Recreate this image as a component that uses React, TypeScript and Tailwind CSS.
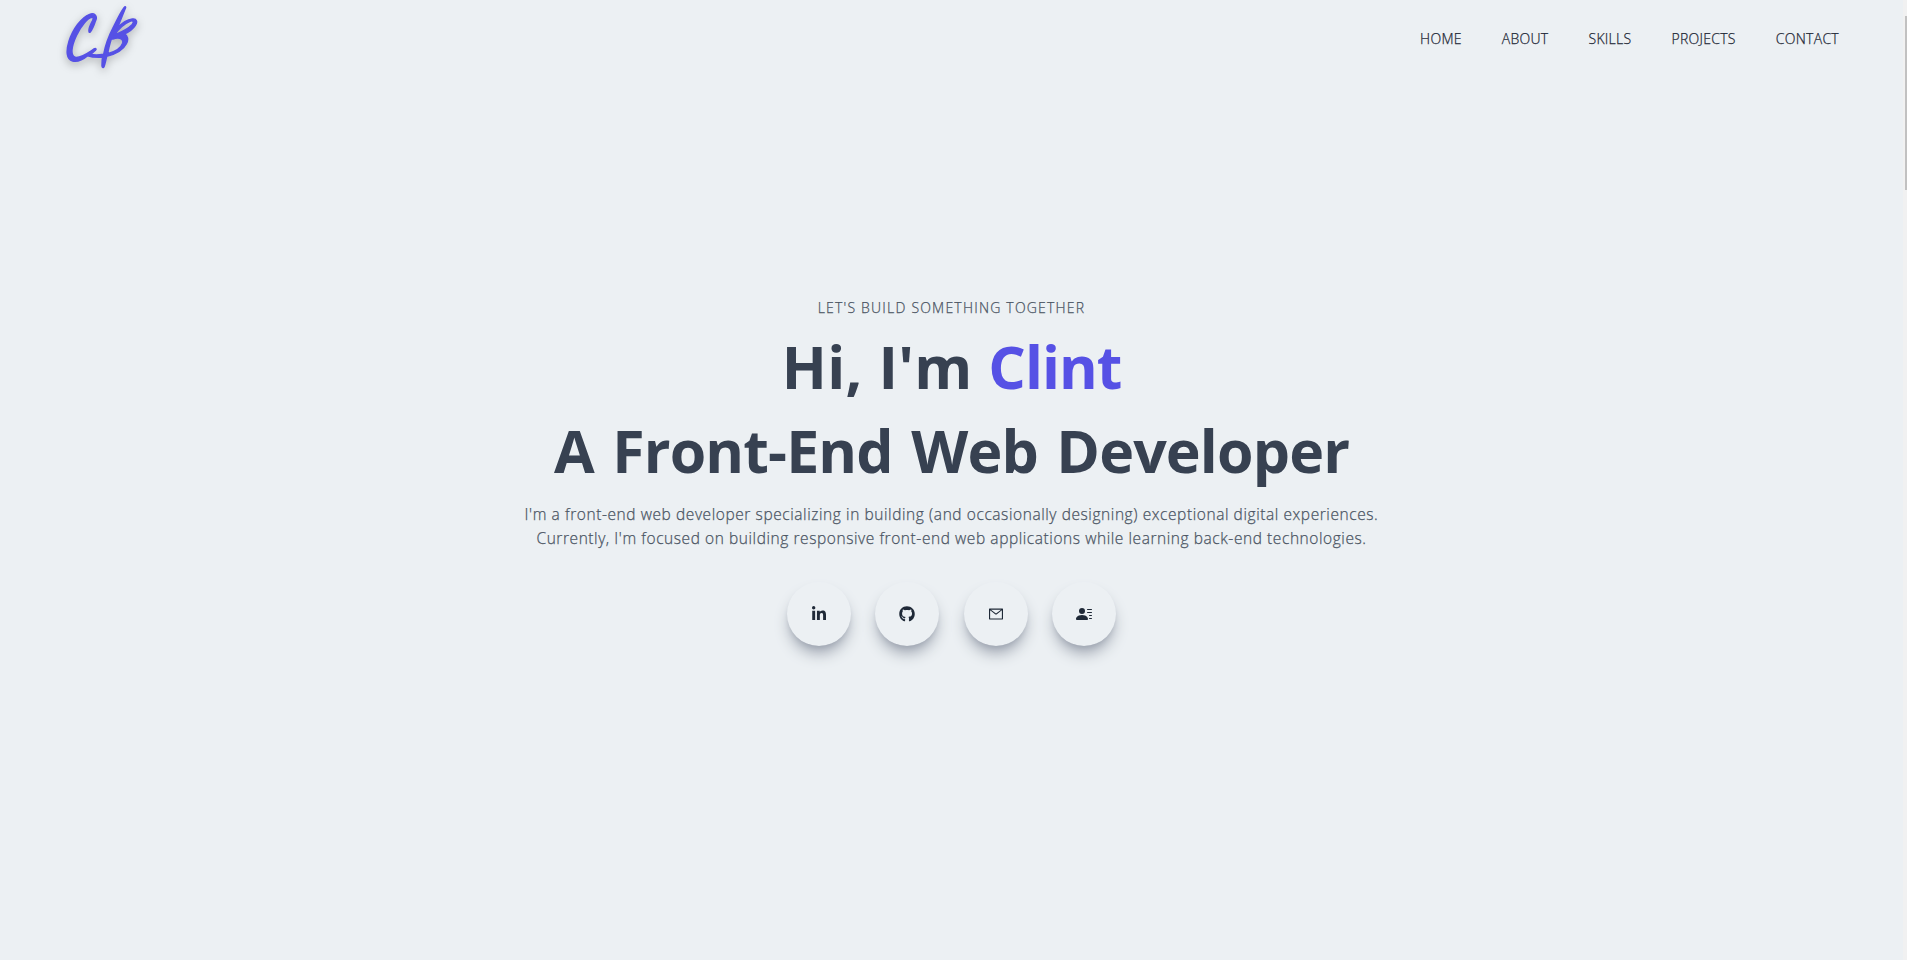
import { AiOutlineMail } from "react-icons/ai";
import { BsFillPersonLinesFill } from "react-icons/bs";
import { FaGithub, FaLinkedinIn } from "react-icons/fa";

const navItems = ["Home", "About", "Skills", "Projects", "Contact"];

const socials = [
  { label: "LinkedIn", Icon: FaLinkedinIn },
  { label: "GitHub", Icon: FaGithub },
  { label: "Email", Icon: AiOutlineMail },
  { label: "Resume", Icon: BsFillPersonLinesFill },
];

function Logo() {
  return (
    <svg
      viewBox="0 0 330 240"
      className="h-20 w-[110px] drop-shadow-[0_3px_4px_rgba(0,0,0,0.28)]"
      fill="#5651e5"
      stroke="#5651e5"
      strokeWidth="4.5"
      strokeLinejoin="round"
      aria-hidden="true"
    >
      <path d="M118 97 C115 92 119 78 127 63 C131 55 131 52 126 52 C113 54 93 77 79 107 C64 139 60 168 76 172 C92 175 112 160 132 147 C138 144 140 148 136 151 C131 156 126 160 122 163 C134 166 147 165 161 163 C166 138 173 115 188 86 C201 59 213 34 222 23 C226 18 228 20 226 25 C219 43 209 66 202 84 C216 69 233 59 247 57 C260 55 263 66 256 76 C249 87 236 96 223 102 C233 107 236 119 229 131 C220 149 201 161 170 169 C167 182 165 193 162 200 C160 204 156 202 156 197 C156 188 156 179 158 171 C142 172 125 171 113 167 C99 179 82 186 68 183 C49 178 48 153 57 124 C68 88 94 52 119 43 C133 38 143 48 137 61 C133 73 126 91 120 97 Z M193 105 C207 99 232 89 246 74 C253 66 250 60 240 64 C222 71 206 87 193 105 Z M184 116 C179 132 175 147 173 161 C193 156 213 145 218 130 C222 117 209 112 196 115 C190 116 187 119 184 116 Z" fillRule="evenodd" />
    </svg>
  );
}

export default function App() {
  return (
    <div className="flex h-[960px] w-full overflow-hidden bg-[#ecf0f3] font-['Open_Sans','Noto_Sans',sans-serif]">
      <div className="flex min-w-0 flex-1 flex-col">
        <header className="flex h-20 shrink-0 items-center justify-between pr-16 pl-[50px]">
          <Logo />
          <nav className="pb-0.5">
            <ul className="flex gap-10 text-sm leading-5 font-light tracking-[0.28px] text-[#1f2937] uppercase [-webkit-text-stroke:0.25px]">
              {navItems.map((item) => (
                <li key={item}>{item}</li>
              ))}
            </ul>
          </nav>
        </header>

        <main className="flex flex-col items-center pt-[218px] text-center text-[#4b5563]">
          <p className="text-sm leading-5 font-light tracking-[1.2px] uppercase [-webkit-text-stroke:0.25px]">
            Let's build something together
          </p>
          <h1 className="mt-[18px] text-[59px] leading-[60px] font-bold tracking-[0.36px] text-[#374151]">
            Hi, I'm <span className="tracking-[-1px] text-[#5651e5]">Clint</span>
          </h1>
          <h1 className="mt-6 text-[59px] leading-[60px] font-bold tracking-[-0.86px] text-[#374151] [word-spacing:4px]">
            A Front-End Web Developer
          </h1>
          <p className="mt-[22px] text-[15.5px] leading-6 font-light tracking-[0.58px] [-webkit-text-stroke:0.25px]">
            I'm a front-end web developer specializing in building (and occasionally designing) exceptional digital
            experiences.
            <br />
            <span className="tracking-[0.57px]">
              Currently, I'm focused on building responsive front-end web applications while learning back-end
              technologies.
            </span>
          </p>
          <div className="mt-8 flex w-[330px] justify-between">
            {socials.map(({ label, Icon }) => (
              <button
                key={label}
                aria-label={label}
                className="flex size-16 items-center justify-center rounded-full text-base text-[#1f2937] shadow-[0_10px_15px_-3px_#9ca3af,0_4px_6px_-4px_#9ca3af]"
              >
                <Icon />
              </button>
            ))}
          </div>
        </main>
      </div>

      <div className="flex w-1 shrink-0 flex-col items-end bg-[#f1f1f1] pt-4">
        <div className="h-[174px] w-0.5 bg-[#c1c1c1]" />
      </div>
    </div>
  );
}
